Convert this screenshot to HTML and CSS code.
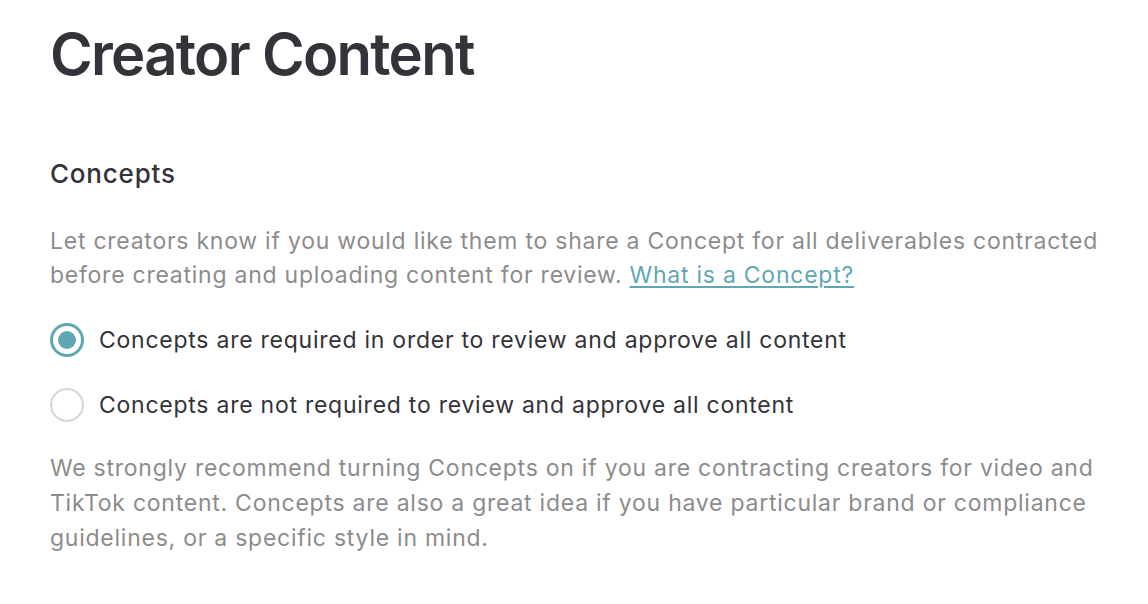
FILE: index.html
```html
<!DOCTYPE html>
<html>
<head>
<meta charset="utf-8">
<link rel="stylesheet" href="styles.css">
</head>
<body>
<main class="page">
  <h1 class="title">Creator Content</h1>
  <section class="section">
    <h2 class="section-title">Concepts</h2>
    <p class="desc">Let creators know if you would like them to share a Concept for all deliverables contracted before creating and uploading content for review. <a class="link" href="#">What is a Concept?</a></p>
    <div class="options">
      <label class="option">
        <span class="radio checked"></span>
        <span class="option-text">Concepts are required in order to review and approve all content</span>
      </label>
      <label class="option">
        <span class="radio"></span>
        <span class="option-text">Concepts are not required to review and approve all content</span>
      </label>
    </div>
    <p class="note">We strongly recommend turning Concepts on if you are contracting creators for video and TikTok content. Concepts are also a great idea if you have particular brand or compliance guidelines, or a specific style in mind.</p>
  </section>
</main>
</body>
</html>
```
FILE: styles.css
```css
* { box-sizing: border-box; }
html, body { margin: 0; padding: 0; background: #ffffff; }
body { font-family: Inter, "Noto Sans", sans-serif; color: #333339; }
.page { padding: 19px 30px 0 50px; }
.title { margin: 0; font-size: 58px; font-weight: 600; line-height: 70px; letter-spacing: -1.7px; color: #333339; }
.section { margin-top: 69px; }
.section-title { margin: 0; font-size: 26px; font-weight: 500; line-height: 32px; letter-spacing: 0.8px; color: #333339; }
.desc { margin: 34px 0 0 0; font-size: 23px; line-height: 34px; letter-spacing: 0.75px; color: #8c8c8c; }
.link { color: #5fa8b3; text-decoration: underline; text-underline-offset: 3px; }
.options { margin-top: 31px; display: flex; flex-direction: column; gap: 31px; }
.option { display: flex; align-items: center; gap: 15px; }
.radio { width: 34px; height: 34px; border-radius: 50%; border: 2.5px solid #d6d6d6; flex: none; display: flex; align-items: center; justify-content: center; }
.radio.checked { border: 3.5px solid #5fa8b3; }
.radio.checked::after { content: ""; width: 18px; height: 18px; border-radius: 50%; background: #5fa8b3; }
.option-text { font-size: 23px; line-height: 34px; letter-spacing: 0.75px; color: #333339; }
.note { margin: 29px 0 0 0; max-width: 1048px; font-size: 23px; line-height: 35px; letter-spacing: 0.75px; color: #8c8c8c; }
```
